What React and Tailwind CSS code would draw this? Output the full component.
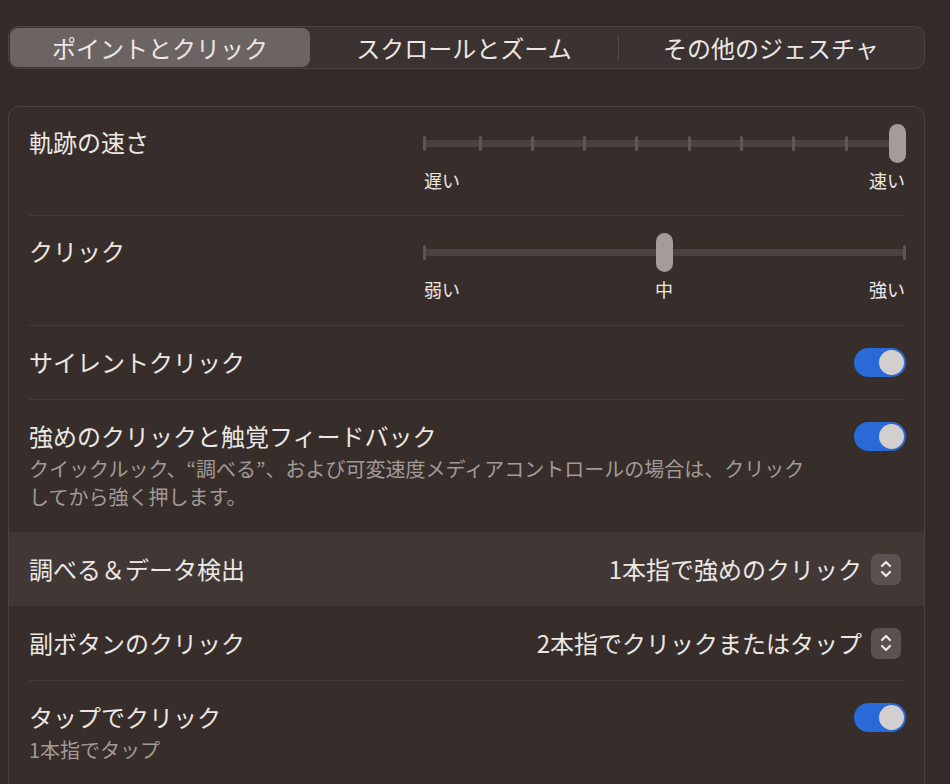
import React from 'react'

const font = { fontFamily: '"Noto Sans CJK JP", "Noto Sans", sans-serif' }

function Toggle() {
  return (
    <div className="w-[52px] h-[29px] rounded-full bg-[#2a69d8] flex items-center justify-end pr-[2px] shrink-0">
      <div className="w-[25px] h-[25px] rounded-full bg-[#d3cfce]" />
    </div>
  )
}

function Stepper() {
  return (
    <div className="w-[30px] h-[31px] rounded-[7px] bg-[#5a5250] flex items-center justify-center shrink-0">
      <svg width="14" height="22" viewBox="0 0 14 22" fill="none" stroke="#ece8e6" strokeWidth="2.2" strokeLinecap="round" strokeLinejoin="round">
        <path d="M3 8 L7 4 L11 8" />
        <path d="M3 14 L7 18 L11 14" />
      </svg>
    </div>
  )
}

function Divider() {
  return <div className="mx-[20px] h-px bg-[#463d3a]" />
}

function Slider({ ticks, thumb, labels }) {
  return (
    <div className="w-[482px] shrink-0">
      <div className="relative h-[40px]">
        <div className="absolute left-[1px] right-[1px] top-[16px] h-[7px] bg-[#4a4240]" />
        {ticks.map(x => (
          <div key={x} className="absolute top-[12px] w-[3px] h-[15px] rounded-full bg-[#5f5654]" style={{ left: x - 1 }} />
        ))}
        <div className="absolute top-0 w-[17px] h-[39px] rounded-full bg-[#a39c9a]" style={{ left: thumb - 8 }} />
      </div>
      <div className="relative h-[28px] mt-[2px] text-[18px] text-[#ebe7e5] leading-[28px]">
        {labels.map(l => (
          <span key={l.t} className="absolute" style={l.style}>{l.t}</span>
        ))}
      </div>
    </div>
  )
}

function SliderRow({ title, h, ...props }) {
  return (
    <div className={`flex justify-between pl-[20px] pr-[18px] ${h}`}>
      <div className="pt-[17px] text-[24px] leading-[36px] text-[#ebe7e5]">{title}</div>
      <div className="pt-[17px]">
        <Slider {...props} />
      </div>
    </div>
  )
}

function ToggleRow({ title, desc, h, pt = 'pt-[18px]' }) {
  return (
    <div className={`flex justify-between pl-[20px] pr-[18px] ${h} ${pt}`}>
      <div>
        <div className="text-[24px] leading-[36px] text-[#ebe7e5]">{title}</div>
        {desc && (
          <div className="text-[20px] leading-[28px] text-[#a29a97] mt-[1px]">{desc}</div>
        )}
      </div>
      <div className="pt-[4px]">
        <Toggle />
      </div>
    </div>
  )
}

function SelectRow({ title, value, highlight }) {
  return (
    <div className={`flex items-center justify-between pl-[20px] pr-[23px] h-[74px] ${highlight ? 'bg-[#413836]' : ''}`}>
      <div className="text-[24px] text-[#ebe7e5]">{title}</div>
      <div className="flex items-center gap-[9px]">
        <span className="text-[24px] text-[#ebe7e5]">{value}</span>
        <Stepper />
      </div>
    </div>
  )
}

export default function App() {
  const speedTicks = [425, 481, 533, 585, 637, 690, 742, 794, 847, 898].map(x => x - 425)
  return (
    <div className="min-h-screen w-full bg-[#342b28] overflow-hidden" style={font}>
      <div className="pt-[26px] pl-[8px] w-[925px]">
        {/* Tabs */}
        <div className="h-[43px] rounded-[10px] border border-[#4b4340] bg-[#3b3331] flex items-center p-[1px] text-[24px] text-[#ebe7e5]">
          <div className="w-[300px] h-[39px] rounded-[8px] bg-[#6b6462] flex items-center justify-center">ポイントとクリック</div>
          <div className="w-[308px] h-[39px] flex items-center justify-center">スクロールとズーム</div>
          <div className="w-px h-[26px] bg-[#514845]" />
          <div className="flex-1 h-[39px] flex items-center justify-center">その他のジェスチャ</div>
        </div>

        {/* Settings panel */}
        <div className="mt-[37px] h-[700px] rounded-[11px] border border-[#4b4340] bg-[#372e2b]">
          <SliderRow
            title="軌跡の速さ"
            h="h-[108px]"
            ticks={speedTicks}
            thumb={473}
            labels={[
              { t: '遅い', style: { left: 0 } },
              { t: '速い', style: { right: 1 } },
            ]}
          />
          <Divider />
          <SliderRow
            title="クリック"
            h="h-[109px]"
            ticks={[0, 480]}
            thumb={240}
            labels={[
              { t: '弱い', style: { left: 0 } },
              { t: '中', style: { left: 231 } },
              { t: '強い', style: { right: 1 } },
            ]}
          />
          <Divider />
          <ToggleRow title="サイレントクリック" h="h-[73px]" pt="pt-[18px]" />
          <Divider />
          <ToggleRow
            title="強めのクリックと触覚フィードバック"
            desc={<>クイックルック、“調べる”、および可変速度メディアコントロールの場合は、クリック<br />してから強く押します。</>}
            h="h-[132px]"
            pt="pt-[18px]"
          />
          <SelectRow title="調べる＆データ検出" value="1本指で強めのクリック" highlight />
          <SelectRow title="副ボタンのクリック" value="2本指でクリックまたはタップ" />
          <Divider />
          <ToggleRow title="タップでクリック" desc="1本指でタップ" h="h-[100px]" pt="pt-[18px]" />
        </div>
      </div>
    </div>
  )
}
